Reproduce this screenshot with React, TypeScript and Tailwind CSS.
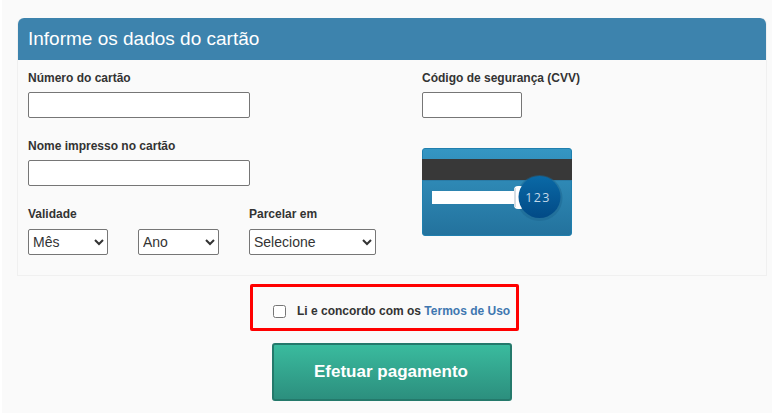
function Field({ label, className }: { label: string; className: string }) {
  return (
    <div>
      <label className="block h-[16px] text-[12px] leading-[16px] font-bold text-[#333]">{label}</label>
      <input type="text" className={`mt-[6px] block h-[26px] rounded-[2px] border border-[#767676] bg-white ${className}`} />
    </div>
  );
}

function Select({ value, className }: { value: string; className: string }) {
  return (
    <select className={`block h-[26px] rounded-[2px] border border-[#767676] bg-white text-[14px] text-[#333] ${className}`}>
      <option>{value}</option>
    </select>
  );
}

function CvvCard() {
  return (
    <svg width="150" height="88" viewBox="0 0 150 88" className="block">
      <defs>
        <linearGradient id="card" x1="0" y1="0" x2="0" y2="1">
          <stop offset="0" stopColor="#3596c3" />
          <stop offset="1" stopColor="#23729d" />
        </linearGradient>
        <linearGradient id="seal" x1="0" y1="0" x2="0" y2="1">
          <stop offset="0" stopColor="#0a69a6" />
          <stop offset="1" stopColor="#024a86" />
        </linearGradient>
      </defs>
      <rect x="0.5" y="0.5" width="149" height="87" rx="2.5" fill="url(#card)" stroke="#1f7fae" />
      <rect x="0" y="11" width="150" height="21" fill="#383838" />
      <rect x="0" y="32" width="150" height="1" fill="#2a7ba6" />
      <rect x="10" y="43" width="84" height="13" fill="#fff" />
      <circle cx="117.5" cy="50" r="23" fill="#1c668f" opacity="0.5" />
      <rect x="92" y="38" width="10" height="23" rx="4" fill="#fff" />
      <rect x="92" y="40" width="2" height="19" fill="#d5dde3" />
      <circle cx="117.5" cy="49" r="21" fill="url(#seal)" />
      <text x="116" y="54" textAnchor="middle" fontSize="12.5" letterSpacing="1.4" fill="#c3d8e8" fontFamily="'Open Sans', sans-serif">123</text>
    </svg>
  );
}

export default function App() {
  return (
    <div className="h-[414px] w-[772px] bg-white font-['Liberation_Sans',Arial,sans-serif]">
      <div className="ml-[2px] h-[413px] w-[770px] bg-[#fafafa] pl-[15px] pr-[5px] pt-[18px]">
        <div className="h-[258px] rounded-t-[6px] border border-t-0 border-[#f0f0f0]">
          <h2 className="flex h-[42px] items-center rounded-t-[6px] bg-[#3d83ad] pl-[10px] text-[19px] text-white">
            Informe os dados do cartão
          </h2>
          <div className="flex pl-[10px] pt-[10px]">
            <div className="w-[394px]">
              <Field label="Número do cartão" className="w-[222px]" />
              <div className="mt-[20px]">
                <Field label="Nome impresso no cartão" className="w-[222px]" />
              </div>
              <div className="mt-[20px] flex">
                <div className="w-[221px]">
                  <label className="block h-[16px] text-[12px] leading-[16px] font-bold text-[#333]">Validade</label>
                  <div className="mt-[7px] flex gap-[30px]">
                    <Select value="Mês" className="w-[80px]" />
                    <Select value="Ano" className="w-[81px]" />
                  </div>
                </div>
                <div>
                  <label className="block h-[16px] text-[12px] leading-[16px] font-bold text-[#333]">Parcelar em</label>
                  <Select value="Selecione" className="mt-[7px] w-[127px]" />
                </div>
              </div>
            </div>
            <div>
              <Field label="Código de segurança (CVV)" className="w-[100px]" />
              <div className="mt-[30px]">
                <CvvCard />
              </div>
            </div>
          </div>
        </div>
        <div className="ml-[233px] mt-[8px] flex h-[47px] w-[269px] items-center rounded-[2px] border-[3px] border-[#ff0000] pl-[20px] pt-[7px]">
          <input type="checkbox" className="h-[13px] w-[13px]" />
          <span className="ml-[11px] text-[12px] font-bold text-[#333]">
            Li e concordo com os <a className="text-[#3f77b0]">Termos de Uso</a>
          </span>
        </div>
        <button className="ml-[255px] mt-[12px] block h-[58px] w-[240px] rounded-[3px] border-2 border-[#24796b] bg-linear-to-b from-[#3abb9e] to-[#2c8f7e] pr-[2px] text-[17px] font-bold text-white">
          Efetuar pagamento
        </button>
      </div>
    </div>
  );
}
